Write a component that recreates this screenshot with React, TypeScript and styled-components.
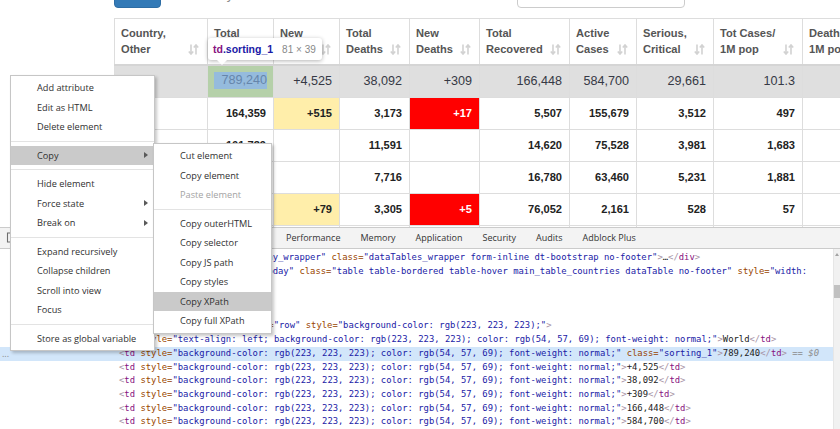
import React from 'react';
import styled, { createGlobalStyle, css } from 'styled-components';

const GlobalStyle = createGlobalStyle`
  html, body {
    margin: 0;
    padding: 0;
    background: #fff;
    overflow: hidden;
  }
  * {
    box-sizing: border-box;
  }
`;

const COLUMNS = '93px 66px 66px 70px 70px 90px 67px 77px 89px 80px';

const Screen = styled.div`
  position: relative;
  width: 840px;
  height: 429px;
  overflow: hidden;
  display: flex;
  flex-direction: column;
  font-family: 'Liberation Sans', Arial, sans-serif;
`;

/* ---------- web page ---------- */

const Site = styled.div`
  height: 227px;
  flex-shrink: 0;
  overflow: hidden;
  padding-left: 114px;
`;

const TopBar = styled.div`
  display: flex;
  width: 571px;
  height: 30px;
  margin-top: -22px;
`;

const NowButton = styled.div`
  width: 47px;
  height: 30px;
  background: #337ab7;
  border: 1px solid #2e6da4;
  border-radius: 4px;
  color: #fff;
  font-size: 13px;
  line-height: 28px;
  text-align: center;
`;

const DayTab = styled.div`
  margin-left: 15px;
  color: #8a8a8a;
  font-size: 13px;
  line-height: 34px;
`;

const SearchBox = styled.div`
  margin-left: auto;
  width: 168px;
  height: 30px;
  border: 1px solid #ccc;
  border-radius: 4px;
`;

const Table = styled.div`
  margin-top: 10px;
  width: max-content;
  border-top: 1px solid #ddd;
`;

const Row = styled.div<{ $world?: boolean }>`
  display: grid;
  grid-template-columns: ${COLUMNS};
  border-bottom: 1px solid #ddd;
  ${(p) =>
    p.$world
      ? css`
          background: #dfdfdf;
          color: rgb(54, 57, 69);
          font-size: 12.6px;
        `
      : css`
          background: #fff;
          color: #222;
          font-size: 11.1px;
          font-weight: bold;
        `}
`;

const HeadRow = styled.div`
  display: grid;
  grid-template-columns: ${COLUMNS};
  border-bottom: 2px solid #d5d5d5;
`;

const HeadCell = styled.div`
  height: 45px;
  border-left: 1px solid #ddd;
  padding: 6px 8px 7px 6px;
  display: flex;
  justify-content: space-between;
  align-items: flex-end;
  font-size: 11.1px;
  font-weight: bold;
  line-height: 16px;
  color: #555;
  white-space: nowrap;
  svg {
    flex-shrink: 0;
    margin-bottom: 2px;
  }
`;

const HeadLabel = styled.div`
  align-self: flex-start;
`;

type Tone = 'plain' | 'yellow' | 'red' | 'left';

const Cell = styled.div<{ $tone: Tone }>`
  height: 31px;
  border-left: 1px solid #ddd;
  line-height: 31px;
  padding: 0 7px 0 6px;
  text-align: ${(p) => (p.$tone === 'left' ? 'left' : 'right')};
  white-space: nowrap;
  ${(p) =>
    p.$tone === 'yellow' &&
    css`
      background: #ffeeaa;
    `}
  ${(p) =>
    p.$tone === 'red' &&
    css`
      background: #ff0000;
      color: #fff;
    `}
`;

const InspectCell = styled.div`
  height: 31px;
  border-left: 1px solid #ddd;
  background: #b5d0a9;
  padding: 6px 6px 8px 6px;
`;

const InspectContent = styled.div`
  height: 17px;
  line-height: 17px;
  background: #95bbdd;
  color: #6585ab;
  text-align: right;
`;

const SortIcon = () => (
  <svg width="11" height="11" viewBox="0 0 11 11">
    <g fill="none" stroke="#d2d2d2" strokeWidth="1.6">
      <path d="M3 0.5v9.5M0.8 7.4l2.2 2.6 2.2-2.6" />
      <path d="M8 10.5V1M5.8 3.6L8 1l2.2 2.6" />
    </g>
  </svg>
);

const headers: [string, string][] = [
  ['Country,', 'Other'],
  ['Total', 'Cases'],
  ['New', 'Cases'],
  ['Total', 'Deaths'],
  ['New', 'Deaths'],
  ['Total', 'Recovered'],
  ['Active', 'Cases'],
  ['Serious,', 'Critical'],
  ['Tot Cases/', '1M pop'],
  ['Deaths/', '1M pop'],
];

type CellData = string | { v: string; tone: Tone };

const rows: CellData[][] = [
  ['USA', '164,359', { v: '+515', tone: 'yellow' }, '3,173', { v: '+17', tone: 'red' }, '5,507', '155,679', '3,512', '497', '10'],
  ['Italy', '101,739', '', '11,591', '', '14,620', '75,528', '3,981', '1,683', '192'],
  ['Spain', '94,417', '', '7,716', '', '16,780', '63,460', '5,231', '1,881', '165'],
  ['China', '81,518', { v: '+79', tone: 'yellow' }, '3,305', { v: '+5', tone: 'red' }, '76,052', '2,161', '528', '57', '2'],
  ['Germany', '66,885', '', '645', '', '13,500', '52,740', '1,979', '798', '8'],
];

const world = ['+4,525', '38,092', '+309', '166,448', '584,700', '29,661', '101.3', '4.9'];

/* ---------- devtools ---------- */

const DevTools = styled.div`
  flex: 1;
  display: flex;
  flex-direction: column;
  min-height: 0;
  background: #fff;
`;

const TabBar = styled.div`
  height: 22px;
  flex-shrink: 0;
  display: flex;
  align-items: center;
  background: #f3f3f3;
  border-top: 1px solid #cbcbcb;
  border-bottom: 1px solid #cbcbcb;
  font-family: 'Open Sans', 'Liberation Sans', sans-serif;
  font-size: 9px;
  color: #333;
`;

const LeadTabs = styled.div`
  width: 276px;
  flex-shrink: 0;
  display: flex;
  align-items: center;
  overflow: hidden;
  padding-left: 6px;
`;

const Tab = styled.div`
  padding: 0 10px;
  line-height: 20px;
  white-space: nowrap;
`;

const InspectIcon = () => (
  <svg width="14" height="12" viewBox="0 0 14 12">
    <path d="M4 1H1.5v9H4" fill="none" stroke="#6e6e6e" strokeWidth="1.1" />
    <path d="M7 4l5 2-2 1 2 2-1 1-2-2-1 2z" fill="#6e6e6e" />
  </svg>
);

const Pane = styled.div`
  flex: 1;
  display: flex;
  min-height: 0;
`;

const Code = styled.div`
  flex: 1;
  padding-top: 2px;
  overflow: hidden;
  font-family: 'DejaVu Sans Mono', 'Liberation Mono', monospace;
  font-size: 8.88px;
  line-height: 13.7px;
  white-space: pre;
`;

const Line = styled.div<{ $selected?: boolean }>`
  display: flex;
  height: 13.7px;
  background: ${(p) => (p.$selected ? '#d2e6fa' : 'transparent')};
`;

const Gutter = styled.span<{ $indent: number }>`
  width: ${(p) => p.$indent}px;
  flex-shrink: 0;
  padding-left: 2px;
  font-family: 'Open Sans', sans-serif;
  font-size: 9px;
  color: #8a8a8a;
`;

const Bracket = styled.span`
  color: #a894a6;
`;
const TagName = styled.span`
  color: #881280;
`;
const AttrName = styled.span`
  color: #994500;
`;
const AttrValue = styled.span`
  color: #1a1aa6;
`;
const TextNode = styled.span`
  color: #222;
`;
const Dollar = styled.span`
  color: #8d8d8d;
  font-style: italic;
`;

const Scrollbar = styled.div`
  width: 7px;
  flex-shrink: 0;
  background: #f1f1f1;
  border-left: 1px solid #e6e6e6;
  display: flex;
  flex-direction: column;
  align-items: center;
`;

const ScrollArrow = styled.div`
  margin-top: 4px;
  width: 0;
  height: 0;
  border-left: 2.5px solid transparent;
  border-right: 2.5px solid transparent;
  border-bottom: 3px solid #a3a3a3;
`;

const ScrollThumb = styled.div`
  margin-top: 29px;
  width: 6px;
  height: 13px;
  background: #c1c1c1;
`;

function markup(src: string): React.ReactNode[] {
  const out: React.ReactNode[] = [];
  const push = (node: React.ReactNode) =>
    out.push(<React.Fragment key={out.length}>{node}</React.Fragment>);
  let i = 0;
  let inTag = false;
  while (i < src.length) {
    const rest = src.slice(i);
    if (!inTag) {
      const open = /^<\/?([\w-]+)/.exec(rest);
      if (open) {
        push(<Bracket>{rest.startsWith('</') ? '</' : '<'}</Bracket>);
        push(<TagName>{open[1]}</TagName>);
        i += open[0].length;
        inTag = true;
        continue;
      }
      const next = rest.indexOf('<');
      const chunk = next === -1 ? rest : rest.slice(0, next || 1);
      push(<TextNode>{chunk}</TextNode>);
      i += chunk.length;
    } else {
      if (rest[0] === '>') {
        push(<Bracket>{'>'}</Bracket>);
        inTag = false;
        i++;
        continue;
      }
      if (rest[0] === ' ') {
        push(' ');
        i++;
        continue;
      }
      const attr = /^([\w-]+)(=)?("[^"]*"?)?/.exec(rest);
      if (attr && attr[0]) {
        push(<AttrName>{attr[1] + (attr[2] ?? '')}</AttrName>);
        if (attr[3]) push(<AttrValue>{attr[3]}</AttrValue>);
        i += attr[0].length;
        continue;
      }
      push(rest[0]);
      i++;
    }
  }
  return out;
}

const tdStyle = 'background-color: rgb(223, 223, 223); color: rgb(54, 57, 69); font-weight: normal;';

const codeLines: { indent: number; src: string; selected?: boolean }[] = [
  {
    indent: 91,
    src: '<div id="main_table_countries_today_wrapper" class="dataTables_wrapper form-inline dt-bootstrap no-footer">…</div>',
  },
  {
    indent: 91,
    src: '<table id="main_table_countries_today" class="table table-bordered table-hover main_table_countries dataTable no-footer" style="width:',
  },
  { indent: 100, src: '<thead>…</thead>' },
  { indent: 100, src: '<tbody>' },
  { indent: 108, src: '<tr role="row">…</tr>' },
  { indent: 108, src: '<tr class="odd total_row" role="row" style="background-color: rgb(223, 223, 223);">' },
  {
    indent: 119,
    src: '<td style="text-align: left; background-color: rgb(223, 223, 223); color: rgb(54, 57, 69); font-weight: normal;">World</td>',
  },
  { indent: 119, src: `<td style="${tdStyle}" class="sorting_1">789,240</td>`, selected: true },
  ...['+4,525', '38,092', '+309', '166,448', '584,700'].map((v) => ({
    indent: 119,
    src: `<td style="${tdStyle}">${v}</td>`,
  })),
];

/* ---------- overlays ---------- */

const Tooltip = styled.div`
  position: absolute;
  left: 208px;
  top: 38px;
  height: 22px;
  padding: 0 6px 0 5px;
  display: flex;
  align-items: center;
  gap: 9px;
  background: #fff;
  border-radius: 3px;
  box-shadow: 0 1px 4px rgba(0, 0, 0, 0.3);
  white-space: nowrap;
  &::after {
    content: '';
    position: absolute;
    left: 9px;
    bottom: -5px;
    border-left: 5px solid transparent;
    border-right: 5px solid transparent;
    border-top: 5px solid #fff;
  }
`;

const TipTag = styled.span`
  font-size: 10.5px;
  font-weight: bold;
  color: #881280;
`;

const TipClass = styled.span`
  color: #1a1aa6;
`;

const TipSize = styled.span`
  font-size: 10px;
  color: #888;
`;

const Menu = styled.div<{ $left: number; $top: number; $width: number }>`
  position: absolute;
  left: ${(p) => p.$left}px;
  top: ${(p) => p.$top}px;
  width: ${(p) => p.$width}px;
  padding: 2px 0;
  background: #fff;
  border: 1px solid #c6c6c6;
  box-shadow: 2px 2px 3px rgba(0, 0, 0, 0.22);
  font-family: 'Open Sans', 'Liberation Sans', sans-serif;
  font-size: 9.2px;
  color: #303030;
`;

const MenuItem = styled.div<{ $active?: boolean; $disabled?: boolean }>`
  height: 19.5px;
  display: flex;
  align-items: center;
  padding: 0 6px 0 26px;
  background: ${(p) => (p.$active ? '#cacaca' : 'transparent')};
  color: ${(p) => (p.$disabled ? '#a3a3a3' : 'inherit')};
  white-space: nowrap;
  span {
    flex: 1;
  }
`;

const SubArrow = styled.i`
  width: 0;
  height: 0;
  border-top: 3px solid transparent;
  border-bottom: 3px solid transparent;
  border-left: 4px solid #5a5a5a;
`;

const Separator = styled.div`
  height: 1px;
  margin: 4px 0;
  background: #e3e3e3;
`;

type Entry = { label: string; active?: boolean; disabled?: boolean; sub?: boolean } | 'sep';

const mainMenu: Entry[] = [
  { label: 'Add attribute' },
  { label: 'Edit as HTML' },
  { label: 'Delete element' },
  'sep',
  { label: 'Copy', active: true, sub: true },
  'sep',
  { label: 'Hide element' },
  { label: 'Force state', sub: true },
  { label: 'Break on', sub: true },
  'sep',
  { label: 'Expand recursively' },
  { label: 'Collapse children' },
  { label: 'Scroll into view' },
  { label: 'Focus' },
  'sep',
  { label: 'Store as global variable' },
];

const copyMenu: Entry[] = [
  { label: 'Cut element' },
  { label: 'Copy element' },
  { label: 'Paste element', disabled: true },
  'sep',
  { label: 'Copy outerHTML' },
  { label: 'Copy selector' },
  { label: 'Copy JS path' },
  { label: 'Copy styles' },
  { label: 'Copy XPath', active: true },
  { label: 'Copy full XPath' },
];

function MenuEntries({ items }: { items: Entry[] }) {
  return (
    <>
      {items.map((it, i) =>
        it === 'sep' ? (
          <Separator key={i} />
        ) : (
          <MenuItem key={i} $active={it.active} $disabled={it.disabled}>
            <span>{it.label}</span>
            {it.sub && <SubArrow />}
          </MenuItem>
        )
      )}
    </>
  );
}

export default function App() {
  return (
    <Screen>
      <GlobalStyle />
      <Site>
        <TopBar>
          <NowButton>Now</NowButton>
          <DayTab>Yesterday</DayTab>
          <SearchBox />
        </TopBar>
        <Table>
          <HeadRow>
            {headers.map(([a, b]) => (
              <HeadCell key={a + b}>
                <HeadLabel>
                  {a}
                  <br />
                  {b}
                </HeadLabel>
                <SortIcon />
              </HeadCell>
            ))}
          </HeadRow>
          <Row $world>
            <Cell $tone="left">World</Cell>
            <InspectCell>
              <InspectContent>789,240</InspectContent>
            </InspectCell>
            {world.map((v, i) => (
              <Cell key={i} $tone="plain">
                {v}
              </Cell>
            ))}
          </Row>
          {rows.map((r) => (
            <Row key={r[0] as string}>
              {r.map((c, i) => {
                const v = typeof c === 'string' ? c : c.v;
                const tone: Tone = typeof c === 'string' ? (i === 0 ? 'left' : 'plain') : c.tone;
                return (
                  <Cell key={i} $tone={tone}>
                    {v}
                  </Cell>
                );
              })}
            </Row>
          ))}
        </Table>
      </Site>

      <DevTools>
        <TabBar>
          <LeadTabs>
            <InspectIcon />
            <Tab>Elements</Tab>
            <Tab>Console</Tab>
            <Tab>Sources</Tab>
            <Tab>Network</Tab>
          </LeadTabs>
          <Tab>Performance</Tab>
          <Tab>Memory</Tab>
          <Tab>Application</Tab>
          <Tab>Security</Tab>
          <Tab>Audits</Tab>
          <Tab>Adblock Plus</Tab>
        </TabBar>
        <Pane>
          <Code>
            {codeLines.map((l, i) => (
              <Line key={i} $selected={l.selected}>
                <Gutter $indent={l.indent}>{l.selected ? '...' : ''}</Gutter>
                <span>
                  {markup(l.src)}
                  {l.selected && <Dollar> == $0</Dollar>}
                </span>
              </Line>
            ))}
          </Code>
          <Scrollbar>
            <ScrollArrow />
            <ScrollThumb />
          </Scrollbar>
        </Pane>
      </DevTools>

      <Tooltip>
        <TipTag>
          td<TipClass>.sorting_1</TipClass>
        </TipTag>
        <TipSize>81 × 39</TipSize>
      </Tooltip>

      <Menu $left={10} $top={75} $width={145}>
        <MenuEntries items={mainMenu} />
      </Menu>
      <Menu $left={153} $top={143} $width={119}>
        <MenuEntries items={copyMenu} />
      </Menu>
    </Screen>
  );
}
